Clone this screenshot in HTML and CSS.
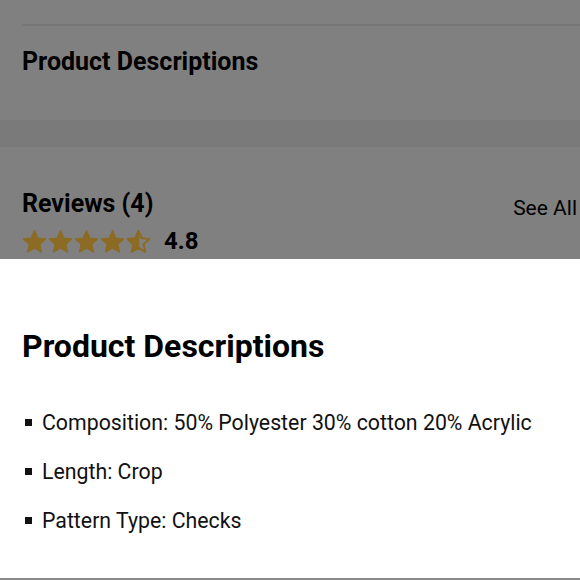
FILE: index.html
```html
<!DOCTYPE html>
<html>
<head>
<meta charset="utf-8">
<link rel="stylesheet" href="styles.css">
</head>
<body>
<div class="page dimmed">
  <div class="top-section">
    <div class="rule"></div>
    <h2 class="section-title">Product Descriptions</h2>
  </div>
  <div class="band"></div>
  <div class="reviews">
    <div class="reviews-head">
      <h2 class="section-title">Reviews (4)</h2>
      <span class="see-all">See All</span>
    </div>
    <div class="rating">
      <div class="stars">
        <svg class="star" viewBox="0 0 24 24"><path d="M12 2l3.1 6.9 7.4.7-5.6 5 1.6 7.3L12 18.1l-6.5 3.8 1.6-7.3-5.6-5 7.4-.7z"/></svg>
        <svg class="star" viewBox="0 0 24 24"><path d="M12 2l3.1 6.9 7.4.7-5.6 5 1.6 7.3L12 18.1l-6.5 3.8 1.6-7.3-5.6-5 7.4-.7z"/></svg>
        <svg class="star" viewBox="0 0 24 24"><path d="M12 2l3.1 6.9 7.4.7-5.6 5 1.6 7.3L12 18.1l-6.5 3.8 1.6-7.3-5.6-5 7.4-.7z"/></svg>
        <svg class="star" viewBox="0 0 24 24"><path d="M12 2l3.1 6.9 7.4.7-5.6 5 1.6 7.3L12 18.1l-6.5 3.8 1.6-7.3-5.6-5 7.4-.7z"/></svg>
        <svg class="star half" viewBox="0 0 24 24"><path class="outline" d="M12 2l3.1 6.9 7.4.7-5.6 5 1.6 7.3L12 18.1l-6.5 3.8 1.6-7.3-5.6-5 7.4-.7z"/><path d="M12 2v16.1l-6.5 3.8 1.6-7.3-5.6-5 7.4-.7z"/></svg>
      </div>
      <span class="score">4.8</span>
    </div>
  </div>
</div>
<div class="sheet">
  <h1 class="sheet-title">Product Descriptions</h1>
  <ul class="desc-list">
    <li>Composition: 50% Polyester 30% cotton 20% Acrylic</li>
    <li>Length: Crop</li>
    <li>Pattern Type: Checks</li>
  </ul>
</div>
</body>
</html>
```

FILE: styles.css
```css
* { box-sizing: border-box; }
html, body {
  margin: 0;
  padding: 0;
  height: 100%;
  overflow: hidden;
}
body {
  font-family: Roboto, "Liberation Sans", sans-serif;
  color: #000;
  background: #808080;
}
/* page beneath the bottom sheet, shown in its dimmed state */
.page.dimmed {
  background: #808080;
  color: #000;
}
.top-section {
  height: 120px;
  padding-left: 22px;
  padding-top: 24px;
}
.rule {
  height: 2px;
  background: #777777;
}
.section-title {
  margin: 0;
  font-size: 25px;
  font-weight: 700;
  line-height: 30px;
}
.top-section .section-title {
  margin-top: 21px;
}
.band {
  height: 27px;
  background: #7a7a7a;
}
.reviews {
  padding: 42px 3px 0 22px;
}
.reviews-head {
  display: flex;
  justify-content: space-between;
  align-items: flex-start;
}
.see-all {
  font-size: 21px;
  line-height: 24px;
  margin-top: 7px;
}
.rating {
  display: flex;
  align-items: center;
  margin-top: 6px;
  height: 30px;
}
.stars {
  display: flex;
  gap: 1px;
}
.star {
  width: 25px;
  height: 25px;
  fill: #8c6b24;
  stroke: #8c6b24;
  stroke-width: 1.6;
  stroke-linejoin: round;
}
.star.half .outline {
  fill: none;
  stroke-width: 2;
}
.score {
  font-size: 24px;
  font-weight: 700;
  margin-left: 13px;
}
.sheet {
  position: fixed;
  left: 0;
  right: 0;
  top: 259px;
  bottom: 0;
  background: #fff;
  border-bottom: 2px solid #8a8a8a;
  padding: 68px 22px 0 22px;
}
.sheet-title {
  margin: 0;
  font-size: 32px;
  font-weight: 700;
  line-height: 38px;
}
.desc-list {
  list-style: none;
  margin: 45px 0 0 0;
  padding: 0;
}
.desc-list li {
  display: flex;
  align-items: center;
  font-size: 21.3px;
  line-height: 25px;
  color: #111;
  margin-bottom: 24px;
}
.desc-list li::before {
  content: "";
  width: 7px;
  height: 7px;
  background: #111;
  margin: 0 10px 0 3px;
  flex: none;
}
```
